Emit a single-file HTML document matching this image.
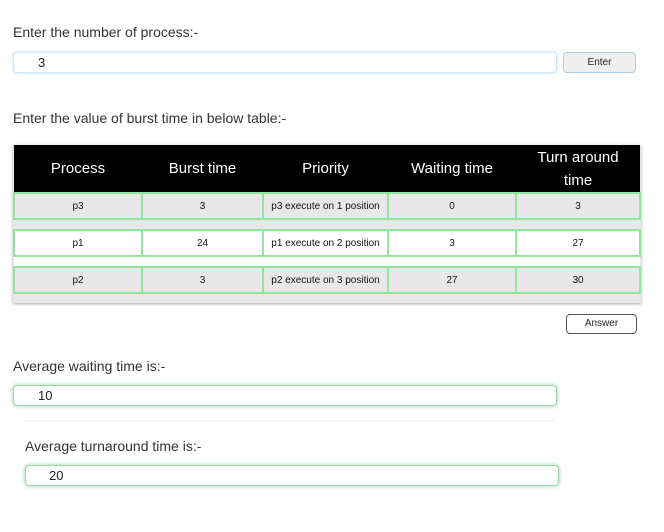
<!DOCTYPE html>
<html><head><style>
body{margin:0;width:664px;height:532px;background:#fff;font-family:"Liberation Sans",sans-serif;color:#222;position:relative;overflow:hidden}
.a{position:absolute}
.lbl{font-size:14px;color:#333}
.inp{position:absolute;height:21px;border-radius:4px;background:#fff;font-size:13px;line-height:20px;box-sizing:border-box}
.blue{border:1px solid #cfe6f7;box-shadow:0 0 3px #bcdcf2}
.green{border:1px solid #9fd8ac;box-shadow:0 0 4px #8fd09f}
.btn{position:absolute;border:1px solid #888;border-radius:4px;font-size:10px;text-align:center;box-sizing:border-box}
table{position:absolute;left:13px;top:145px;width:628px;border-collapse:collapse;background:#e8e8e8;box-shadow:0 1px 3px #aaa}
th{background:#000;color:#fff;font-weight:normal;font-size:15px;height:47px;line-height:23px;padding:0}
td{border:2px solid #90e69a;height:24px;font-size:10px;text-align:center;padding:0;color:#111}
tr.w td{background:#fff}
tr.gap td{border:none;height:9px;padding:0}
</style></head><body>
<div class="a lbl" style="left:13px;top:24px">Enter the number of process:-</div>
<div class="inp blue" style="left:13px;top:52px;width:544px;padding-left:24px">3</div>
<div class="btn" style="left:563px;top:52px;width:73px;height:21px;line-height:19px;background:#efefef;border-color:#a9cde8">Enter</div>
<div class="a lbl" style="left:13px;top:110px">Enter the value of burst time in below table:-</div>
<table>
<tr><th style="width:128px">Process</th><th style="width:121px">Burst time</th><th style="width:125px">Priority</th><th style="width:128px">Waiting time</th><th>Turn around<br>time</th></tr>
<tr><td>p3</td><td>3</td><td>p3 execute on 1 position</td><td>0</td><td>3</td></tr>
<tr class="gap"><td colspan="5"></td></tr>
<tr class="w"><td>p1</td><td>24</td><td>p1 execute on 2 position</td><td>3</td><td>27</td></tr>
<tr class="gap"><td colspan="5" style="background:#fff"></td></tr>
<tr><td>p2</td><td>3</td><td>p2 execute on 3 position</td><td>27</td><td>30</td></tr>
<tr class="gap"><td colspan="5"></td></tr>
</table>
<div class="btn" style="left:566px;top:314px;width:71px;height:20px;line-height:18px;background:#fff;border-color:#555">Answer</div>
<div class="a lbl" style="left:13px;top:358px">Average waiting time is:-</div>
<div class="inp green" style="left:13px;top:385px;width:544px;padding-left:24px">10</div>
<div class="a" style="left:25px;top:420px;width:530px;height:1px;background:#f2f2f2"></div>
<div class="a lbl" style="left:25px;top:438px">Average turnaround time is:-</div>
<div class="inp green" style="left:25px;top:465px;width:534px;padding-left:23px">20</div>
</body></html>
